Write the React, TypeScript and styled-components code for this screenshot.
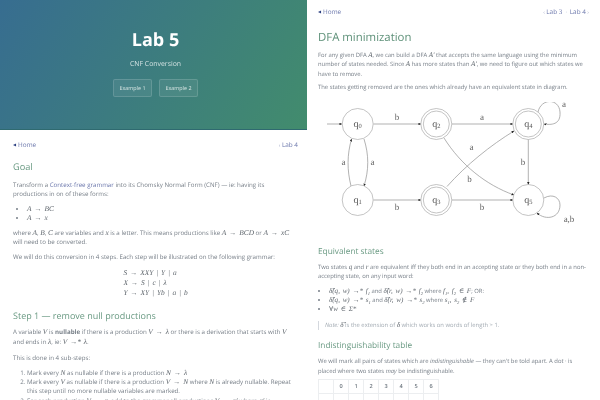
import React from 'react';
import styled, { createGlobalStyle } from 'styled-components';

const Global = createGlobalStyle`
  html, body { margin: 0; padding: 0; background: #fff; }
  body { font-family: "Open Sans", "Liberation Sans", sans-serif; text-rendering: geometricPrecision; }
`;

const Screen = styled.div`
  display: grid;
  grid-template-columns: 307px 293px;
  width: 600px;
  height: 400px;
  overflow: hidden;
  color: #767e87;
  line-height: 9.3px;
  filter: blur(0.35px);
`;

const Column = styled.div<{ $font: number }>`
  height: 400px;
  overflow: hidden;
  font-size: ${(p) => p.$font}px;
`;

const Hero = styled.header`
  box-sizing: border-box;
  height: 130px;
  padding: 29px 0 0 4px;
  text-align: center;
  color: #fff;
  background: linear-gradient(120deg, #376d90, #428c6d);
  border-bottom: 1px solid #2f6a70;
`;

const HeroTitle = styled.h1`
  margin: 0;
  font-size: 18px;
  line-height: 22px;
  font-weight: 700;
`;

const HeroSub = styled.p`
  margin: 8px 0 0;
  font-size: 6.9px;
  line-height: 11px;
  color: #d3e2e2;
`;

const HeroButtons = styled.div`
  display: flex;
  justify-content: center;
  gap: 7px;
  margin-top: 9px;
`;

const HeroButton = styled.a`
  box-sizing: border-box;
  width: 39px;
  height: 18px;
  font-size: 5.4px;
  line-height: 16px;
  color: #d8e6e4;
  background: rgba(255, 255, 255, 0.07);
  border: 1px solid rgba(255, 255, 255, 0.14);
  border-radius: 2px;
`;

const Body = styled.main<{ $left: number; $right: number; $top: number }>`
  padding: ${(p) => p.$top}px ${(p) => p.$right}px 0 ${(p) => p.$left}px;
`;

const Nav = styled.nav`
  display: flex;
  justify-content: space-between;
  height: 10px;
  color: #6a76ab;
  font-size: 6.4px;
  line-height: 10px;
`;

const Arrow = styled.span`
  color: #2b3f80;
  font-size: 4px;
  margin-right: 2px;
  vertical-align: 1px;
`;

const Dim = styled.span`
  color: #a7adc9;
  font-size: 5.5px;
`;

const PageTitle = styled.h2`
  margin: 11px 0 0;
  font-size: 11.4px;
  line-height: 20px;
  font-weight: 400;
  color: #5e9179;
`;

const Heading = styled.h2<{ $size: number; $top: number }>`
  margin: ${(p) => p.$top}px 0 0;
  font-size: ${(p) => p.$size}px;
  line-height: 16px;
  font-weight: 400;
  color: #6a9a83;
`;

const Para = styled.p<{ $top?: number }>`
  margin: ${(p) => p.$top ?? 5.5}px 0 0;
`;

const Link = styled.a`
  color: #6a76ab;
`;

const M = styled.span`
  font-family: "Liberation Serif", "DejaVu Serif", serif;
  font-style: italic;
  font-size: 1.2em;
  word-spacing: 1px;
  color: #5f666d;
`;

const Bullets = styled.ul<{ $indent: number }>`
  margin: 5.5px 0 0;
  padding: 0 0 0 ${(p) => p.$indent}px;
`;

const Numbers = styled.ol`
  margin: 5.5px 0 0;
  padding: 0 0 0 14px;
`;

const Grammar = styled.div`
  display: grid;
  justify-content: center;
  margin-top: 6.5px;
  line-height: 9.9px;
`;

const Note = styled.blockquote`
  margin: 6px 0 0;
  padding-left: 6px;
  border-left: 1px solid #d4d8de;
  color: #a3abb3;
`;

const Diagram = styled.svg`
  display: block;
  width: 256px;
  height: 126px;
  margin: 10px auto 0;
`;

const Table = styled.table`
  margin-top: 3px;
  border-collapse: collapse;
  table-layout: fixed;
  width: 113px;
`;

const Cell = styled.td`
  width: 14px;
  height: 13px;
  padding: 0;
  text-align: center;
  font-size: 5.6px;
  font-weight: 600;
  color: #6f7880;
  border: 1px solid #eceef0;
`;

const stateLabel = { fontFamily: '"Liberation Serif", serif', fontSize: 10, fill: '#555', textAnchor: 'middle' } as const;

function Sub({ children }: { children: React.ReactNode }) {
  return <sub style={{ fontSize: 4.6, lineHeight: 0 }}>{children}</sub>;
}

function State({ x, y, name, accepting }: { x: number; y: number; name: string; accepting?: boolean }) {
  return (
    <g>
      <circle cx={x} cy={y} r={15.5} fill="none" stroke="#aaa" strokeWidth={0.7} />
      {accepting && <circle cx={x} cy={y} r={13} fill="none" stroke="#aaa" strokeWidth={0.7} />}
      <text x={x} y={y + 2.5} style={stateLabel}>
        q<tspan fontSize={6.5} dy={1.5}>{name}</tspan>
      </text>
    </g>
  );
}

function Edge({ d }: { d: string }) {
  return <path d={d} fill="none" stroke="#909090" strokeWidth={0.7} markerEnd="url(#tip)" />;
}

function Label({ x, y, children }: { x: number; y: number; children: string }) {
  return (
    <text x={x} y={y} style={{ ...stateLabel, fontSize: 9, fill: '#666' }}>
      {children}
    </text>
  );
}

function Automaton() {
  return (
    <Diagram viewBox="325 102 256 126">
      <defs>
        <marker id="tip" markerWidth="4" markerHeight="4" refX="3.6" refY="2" orient="auto">
          <path d="M0 0.3 L4 2 L0 3.7 Z" fill="#222" />
        </marker>
      </defs>
      <Edge d="M326 124 H341" />
      <Edge d="M372.5 124 H420" />
      <Edge d="M451 124 H512" />
      <Edge d="M372.5 200 H420" />
      <Edge d="M451 200 H512" />
      <Edge d="M527.3 139.5 V184.5" />
      <Edge d="M350 186 C346 170 346 155 350.5 139" />
      <Edge d="M363 139 C368 155 368 170 363 186" />
      <Edge d="M443 138 C460 165 485 185 513 195" />
      <Edge d="M446 186.5 C465 165 490 145 513 131" />
      <Edge d="M537 112 C540 98 558 98 559 112 C560 125 550 125 543 124" />
      <Edge d="M543 198 C552 193 559 198 559 205 C559 218 545 221 536 213" />
      <State x={356.7} y={124} name="0" />
      <State x={356.7} y={200} name="1" />
      <State x={435.3} y={124} name="2" accepting />
      <State x={435.3} y={200} name="3" accepting />
      <State x={527.3} y={124} name="4" accepting />
      <State x={527.3} y={200} name="5" />
      <Label x={396} y={120}>b</Label>
      <Label x={481} y={120}>a</Label>
      <Label x={396} y={210}>b</Label>
      <Label x={481} y={210}>b</Label>
      <Label x={342.5} y={165}>a</Label>
      <Label x={371.5} y={165}>a</Label>
      <Label x={470.5} y={150}>a</Label>
      <Label x={468.5} y={182}>b</Label>
      <Label x={522} y={165}>b</Label>
      <Label x={563} y={107}>a</Label>
      <Label x={568} y={222}>a,b</Label>
    </Diagram>
  );
}

function LeftPage() {
  return (
    <Column $font={6.17}>
      <Hero>
        <HeroTitle>Lab 5</HeroTitle>
        <HeroSub>CNF Conversion</HeroSub>
        <HeroButtons>
          <HeroButton>Example 1</HeroButton>
          <HeroButton>Example 2</HeroButton>
        </HeroButtons>
      </Hero>
      <Body $left={13} $right={9} $top={10}>
        <Nav>
          <span><Arrow>◀</Arrow>Home</span>
          <span><Dim>‹ </Dim>Lab 4</span>
        </Nav>
        <Heading $size={9.2} $top={9}>Goal</Heading>
        <Para $top={5}>
          Transform a <Link>Context-free grammar</Link> into its Chomsky Normal Form (CNF) — ie: having its productions in on of these forms:
        </Para>
        <Bullets $indent={14}>
          <li><M>A → BC</M></li>
          <li><M>A → x</M></li>
        </Bullets>
        <Para>
          where <M>A</M>, <M>B</M>, <M>C</M> are variables and <M>x</M> is a letter. This means productions like <M>A → BCD</M> or <M>A → xC</M> will need to be converted.
        </Para>
        <Para>We will do this conversion in 4 steps. Each step will be illustrated on the following grammar:</Para>
        <Grammar>
          <M>S → XXY | Y | a</M>
          <M>X → S | c | λ</M>
          <M>Y → XY | Yb | a | b</M>
        </Grammar>
        <Heading $size={9} $top={10.5}>Step 1 — remove null productions</Heading>
        <Para $top={3}>
          A variable <M>V</M> is <strong>nullable</strong> if there is a production <M>V → λ</M> or there is a derivation that starts with <M>V</M> and ends in <M>λ</M>, ie: <M>V →* λ</M>.
        </Para>
        <Para $top={7}>This is done in 4 sub-steps:</Para>
        <Numbers>
          <li>Mark every <M>N</M> as nullable if there is a production <M>N → λ</M></li>
          <li>Mark every <M>V</M> as nullable if there is a production <M>V → N</M> where <M>N</M> is already nullable. Repeat this step until no more nullable variables are marked.</li>
          <li>For each production <M>V → α</M>, add to the grammar all productions <M>V → α′</M> where <M>α′</M> is</li>
        </Numbers>
      </Body>
    </Column>
  );
}

function RightPage() {
  const labels = ['', '0', '1', '2', '3', '4', '5', '6'];
  return (
    <Column $font={5.87}>
      <Body $left={11} $right={11} $top={7}>
        <Nav>
          <span><Arrow>◀</Arrow>Home</span>
          <span><Dim>‹ </Dim>Lab 3 <Dim>&nbsp;·&nbsp; </Dim> Lab 4<Dim> ›</Dim></span>
        </Nav>
        <PageTitle>DFA minimization</PageTitle>
        <Para $top={3}>
          For any given DFA <M>A</M>, we can build a DFA <M>A′</M> that accepts the same language using the minimum number of states needed. Since <M>A</M> has more states than <M>A′</M>, we need to figure out which states we have to remove.
        </Para>
        <Para $top={4}>The states getting removed are the ones which already have an equivalent state in diagram.</Para>
        <Automaton />
        <Heading $size={8.3} $top={16}>Equivalent states</Heading>
        <Para $top={2.5}>
          Two states <M>q</M> and <M>r</M> are equivalent iff they both end in an accepting state or they both end in a non-accepting state, on any input word:
        </Para>
        <Bullets $indent={11}>
          <li><M>δ̂(q, w) →* f<Sub>1</Sub></M> and <M>δ̂(r, w) →* f<Sub>2</Sub></M> where <M>f<Sub>1</Sub>, f<Sub>2</Sub> ∈ F</M>; OR:</li>
          <li><M>δ̂(q, w) →* s<Sub>1</Sub></M> and <M>δ̂(r, w) →* s<Sub>2</Sub></M> where <M>s<Sub>1</Sub>, s<Sub>2</Sub> ∉ F</M></li>
          <li><M>∀w ∈ Σ*</M></li>
        </Bullets>
        <Note><em>Note:</em> <M>δ̂</M> is the extension of <M>δ</M> which works on words of length &gt; 1.</Note>
        <Heading $size={8.3} $top={8.5}>Indistinguishability table</Heading>
        <Para $top={3}>
          We will mark all pairs of states which are <em>indistinguishable</em> — they can't be told apart. A dot · is placed where two states <em>may</em> be indistinguishable.
        </Para>
        <Table>
          <tbody>
            <tr>{labels.map((l) => <Cell key={l}>{l}</Cell>)}</tr>
            <tr>{labels.map((l) => <Cell key={l} />)}</tr>
          </tbody>
        </Table>
      </Body>
    </Column>
  );
}

export default function App() {
  return (
    <>
      <Global />
      <Screen>
        <LeftPage />
        <RightPage />
      </Screen>
    </>
  );
}
